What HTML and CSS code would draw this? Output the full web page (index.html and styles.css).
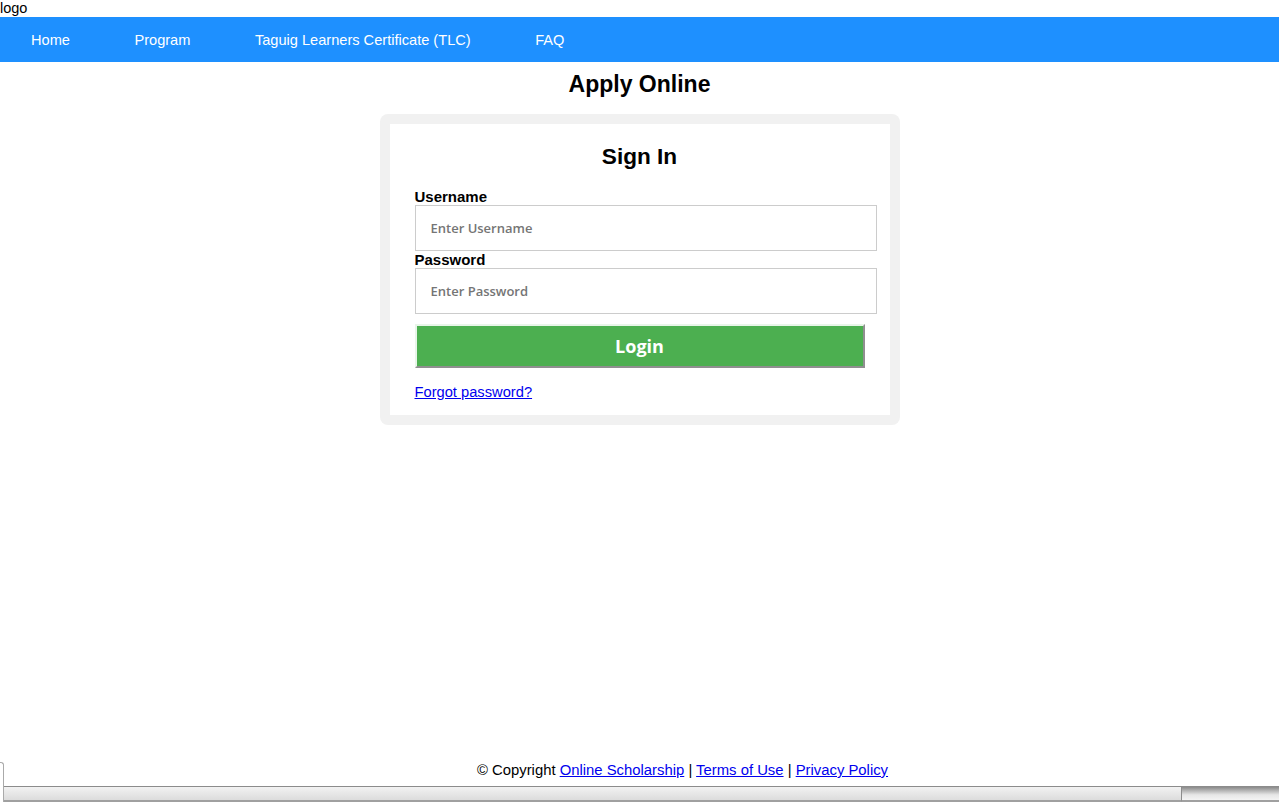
FILE: index.html
```html
<!DOCTYPE html>
<html lang="en">
<head>
    <meta charset="UTF-8">
    <meta name="viewport" content="width=device-width, initial-scale=1.0">
    <title>Online Scholarship - Apply Online</title>
    <link rel="stylesheet" href="styles.css">
</head>
<body>
    <div class="page">
        <!-- Header -->
        <div class="logo">logo</div>
        <div class="topnav">
            <a href="#">Home</a>
            <a href="#">Program</a>
            <a href="#">Taguig Learners Certificate (TLC)</a>
            <a href="#">FAQ</a>
        </div>

        <!-- Main -->
        <div class="main">
            <h2 class="page-title">Apply Online</h2>

            <div class="login-box">
                <form class="login-form" onsubmit="return false;">
                    <h2>Sign In</h2>
                    <label for="uname">Username</label>
                    <input type="text" id="uname" placeholder="Enter Username">
                    <label for="psw">Password</label>
                    <input type="password" id="psw" placeholder="Enter Password">
                    <button type="submit">Login</button>
                    <a class="forgot" href="#">Forgot password?</a>
                </form>
            </div>
        </div>

        <!-- Footer -->
        <div class="footer">
            <p>&copy; Copyright <a href="#">Online Scholarship</a> | <a href="#">Terms of Use</a> | <a href="#">Privacy Policy</a></p>
            <div class="footer-bar">
                <div class="bar-edge"></div>
                <div class="bar-track"></div>
                <div class="bar-thumb"></div>
            </div>
        </div>
    </div>
</body>
</html>
```

FILE: styles.css
```css
/* Base */
body {
    margin: 0;
    font-family: "Liberation Sans", Arial, sans-serif;
    font-size: 16px;
    color: #000;
    background: #fff;
}

.page {
    height: 100vh;
    display: flex;
    flex-direction: column;
    overflow: hidden;
}

.logo {
    height: 17px;
    line-height: 17px;
    font-size: 14.5px;
}

/* Navigation */
.topnav {
    background: #1e90ff;
    height: 45px;
    display: flex;
    align-items: center;
    gap: 4.5px;
    padding-left: 1px;
}

.topnav a {
    color: #fff;
    text-decoration: none;
    font-size: 14.6px;
    padding: 0 30px;
}

/* Main */
.main {
    flex: 1;
    display: flex;
    flex-direction: column;
    align-items: center;
}

.page-title {
    font-size: 23px;
    margin: 9px 0 17px;
    line-height: 26px;
}

.login-box {
    width: 500px;
    padding: 10px;
    background: #f1f1f1;
    border-radius: 8px;
}

.login-form {
    background: #fff;
    padding: 20px 25px 14px;
}

.login-form h2 {
    text-align: center;
    font-size: 22.6px;
    line-height: 26px;
    margin: 0 0 18px;
}

.login-form label {
    display: block;
    font-weight: bold;
    font-size: 15px;
    line-height: 17px;
}

.login-form input {
    display: block;
    box-sizing: border-box;
    width: 462px;
    height: 46px;
    padding: 0 15px;
    border: 1px solid #ccc;
    font-family: "Open Sans", "DejaVu Sans", sans-serif;
    font-size: 13px;
}

.login-form input::placeholder {
    color: #757575;
    font-weight: 600;
}

.login-form button {
    display: block;
    width: 450px;
    height: 44px;
    margin: 10px 0 15px;
    background: #4caf50;
    color: #fff;
    font-family: "Open Sans", "DejaVu Sans", sans-serif;
    font-size: 18px;
    font-weight: bold;
    border: 2px solid;
    border-color: #e8f5e9 #8f8f8f #8f8f8f #e8f5e9;
    cursor: pointer;
}

.forgot {
    color: #0000ee;
    font-size: 14.7px;
    line-height: 17px;
}

/* Footer */
.footer {
    position: relative;
    height: 48px;
}

.footer p {
    margin: 0;
    padding: 8px 0 0 86px;
    text-align: center;
    font-size: 14.85px;
    line-height: 17px;
}

.footer a {
    color: #0000ee;
}

.footer-bar {
    display: flex;
    height: 16px;
    margin-top: 7px;
}

.bar-edge {
    width: 4px;
}

.bar-track {
    flex: 1;
    border-top: 1px solid #8c8c8c;
    border-bottom: 2px solid #a0a0a0;
    border-right: 1px solid #8c8c8c;
    background: linear-gradient(#f2f2f2, #dcdcdc);
}

.bar-thumb {
    width: 97px;
    border-top: 1px solid #8c8c8c;
    border-bottom: 2px solid #a0a0a0;
    background: linear-gradient(#8a8a8a, #e6e6e6 60%, #f4f4f4);
}

.footer::before {
    content: "";
    position: absolute;
    left: 0;
    top: 8px;
    width: 3px;
    height: 40px;
    border-top: 1px solid #aaa;
    border-right: 1px solid #aaa;
    border-top-right-radius: 3px;
}
```
